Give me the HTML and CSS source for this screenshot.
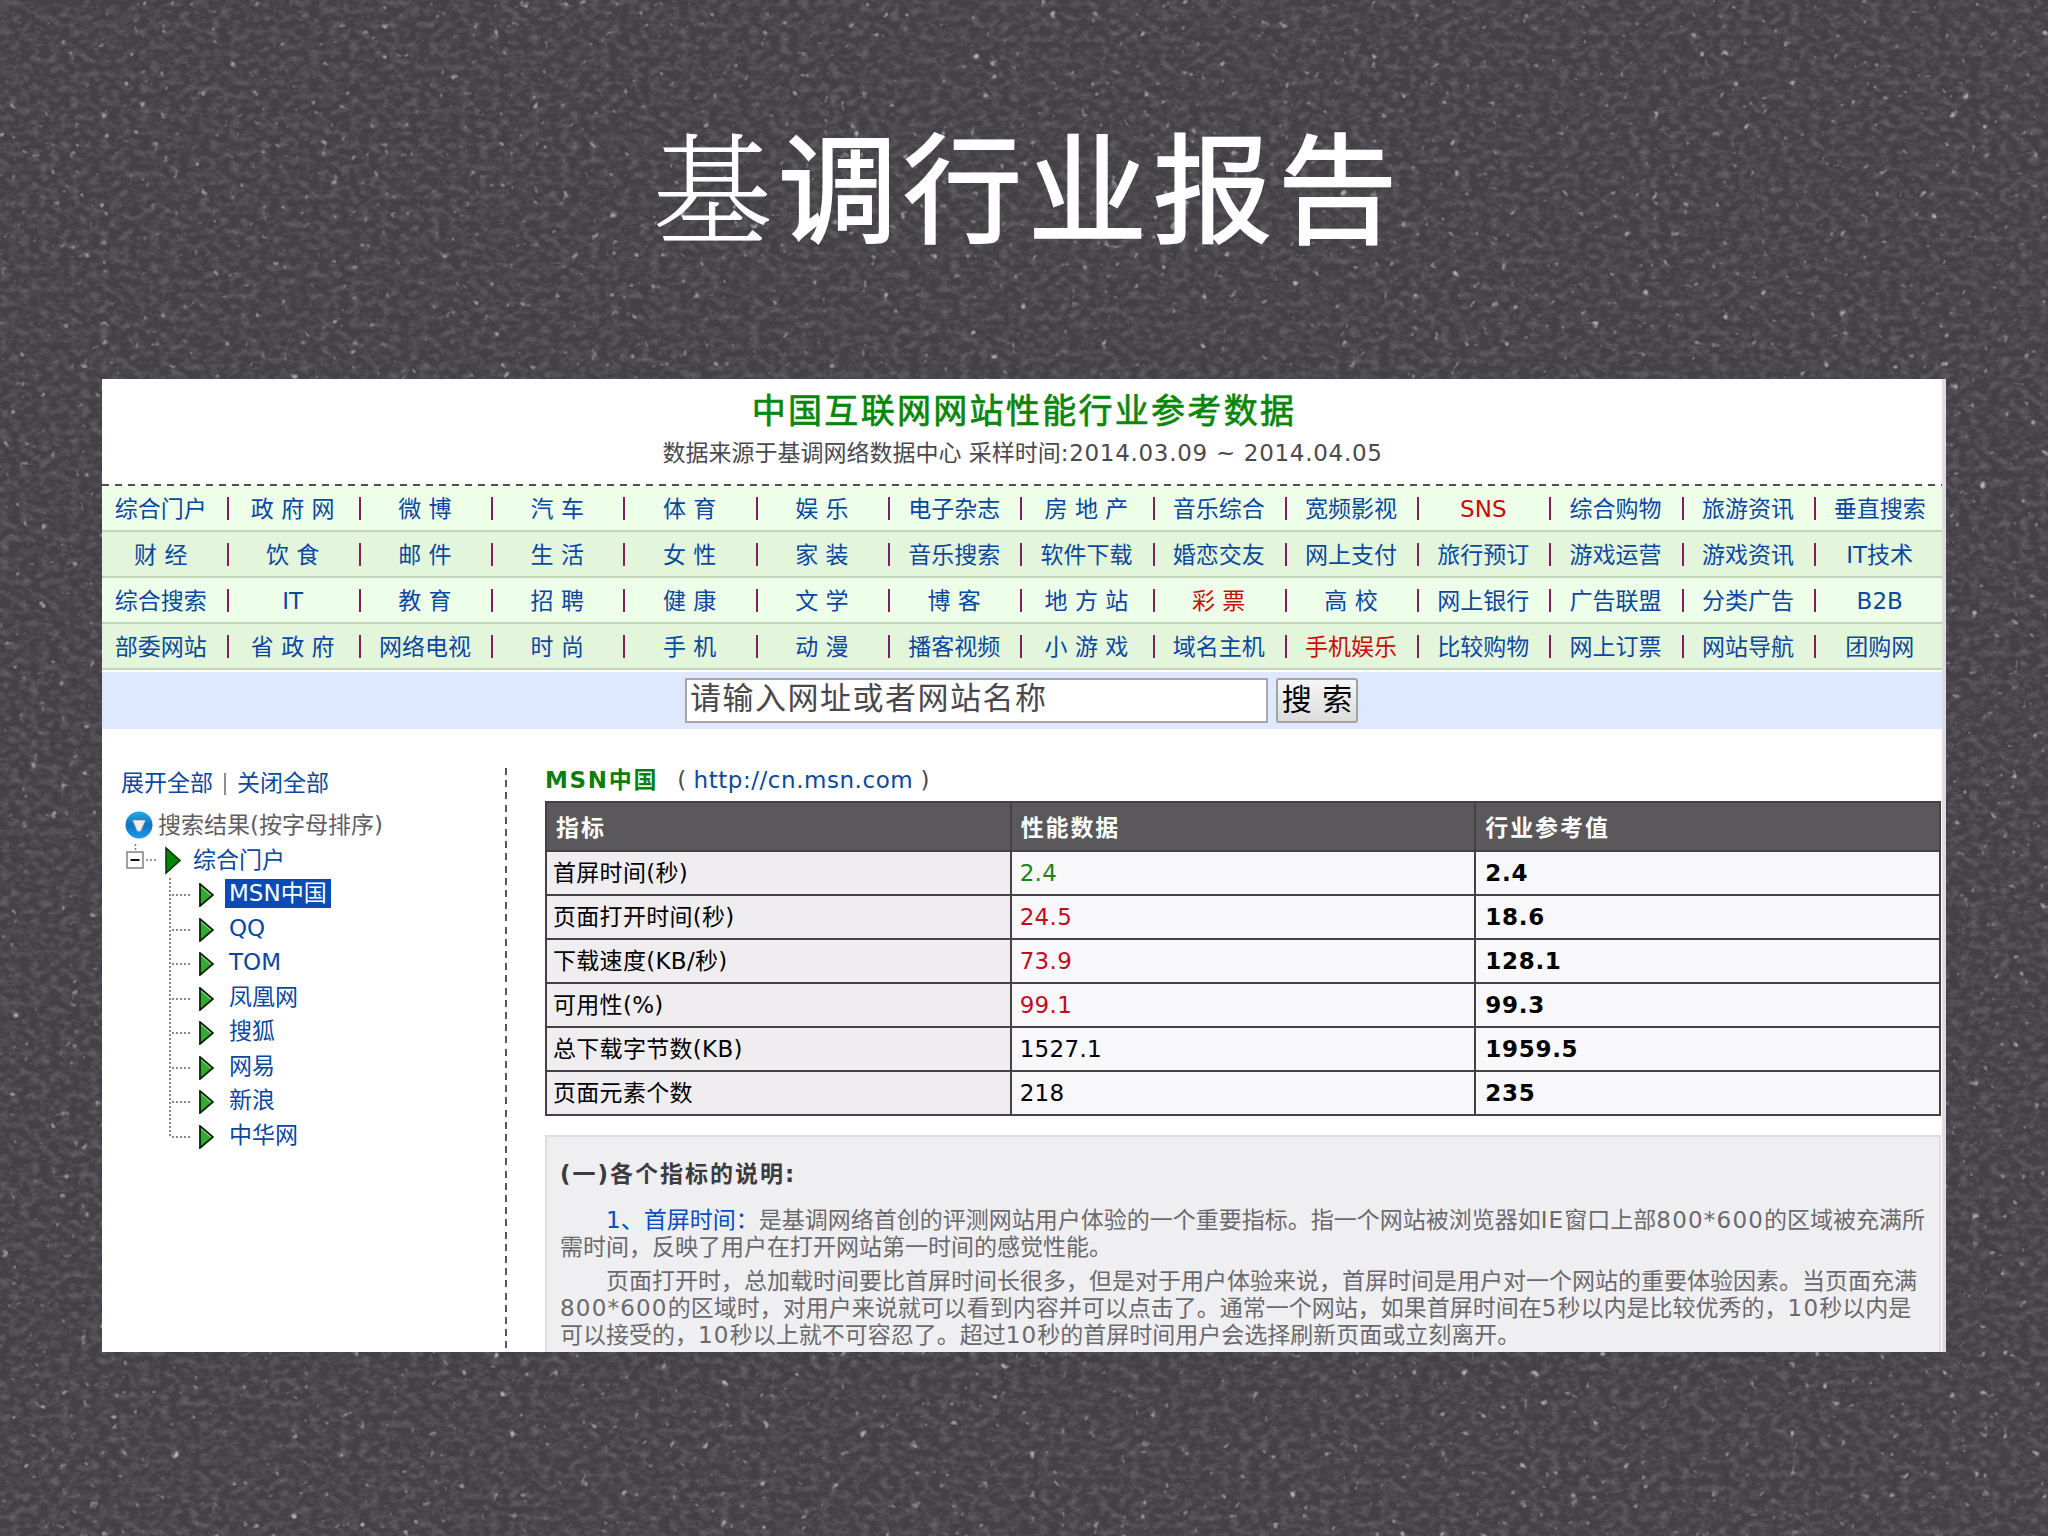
FILE: index.html
```html
<!DOCTYPE html>
<html lang="zh-CN">
<head>
  <meta charset="UTF-8" />
  <title>基调行业报告</title>
  <link rel="stylesheet" href="styles.css">
</head>
<body>

  <!-- slate texture -->
  <svg class="texture" width="2048" height="1536">
    <filter id="grain" x="0" y="0" width="100%" height="100%" color-interpolation-filters="sRGB">
      <feTurbulence type="fractalNoise" baseFrequency="0.1 0.14" numOctaves="4" seed="8" />
      <feColorMatrix type="matrix" values="0 0 0 0 0.52  0 0 0 0 0.51  0 0 0 0 0.53  0.8 0.6 0 0 -0.6" />
    </filter>
    <filter id="specks" x="0" y="0" width="100%" height="100%" color-interpolation-filters="sRGB">
      <feTurbulence type="fractalNoise" baseFrequency="0.1" numOctaves="2" seed="21" />
      <feColorMatrix type="matrix" values="0 0 0 0 0.72  0 0 0 0 0.71  0 0 0 0 0.73  0 5 0 0 -3.55" />
    </filter>
    <rect width="2048" height="1536" filter="url(#grain)" />
    <rect width="2048" height="1536" filter="url(#specks)" />
  </svg>

  <h1><span class="thin">基</span>调行业报告</h1>

  <div class="panel">
    <header>
      <h2>中国互联网网站性能行业参考数据</h2>
      <p>数据来源于基调网络数据中心 采样时间<span class="date">:2014.03.09 ~ 2014.04.05</span></p>
    </header>

    <nav>
      <ul>
        <li>综合门户</li><li>政 府 网</li><li>微 博</li><li>汽 车</li><li>体 育</li><li>娱 乐</li><li>电子杂志</li>
        <li>房 地 产</li><li>音乐综合</li><li>宽频影视</li><li class="hot">SNS</li><li>综合购物</li><li>旅游资讯</li><li>垂直搜索</li>
      </ul>
      <ul>
        <li>财 经</li><li>饮 食</li><li>邮 件</li><li>生 活</li><li>女 性</li><li>家 装</li><li>音乐搜索</li>
        <li>软件下载</li><li>婚恋交友</li><li>网上支付</li><li>旅行预订</li><li>游戏运营</li><li>游戏资讯</li><li>IT技术</li>
      </ul>
      <ul>
        <li>综合搜索</li><li>IT</li><li>教 育</li><li>招 聘</li><li>健 康</li><li>文 学</li><li>博 客</li>
        <li>地 方 站</li><li class="hot">彩 票</li><li>高 校</li><li>网上银行</li><li>广告联盟</li><li>分类广告</li><li>B2B</li>
      </ul>
      <ul>
        <li>部委网站</li><li>省 政 府</li><li>网络电视</li><li>时 尚</li><li>手 机</li><li>动 漫</li><li>播客视频</li>
        <li>小 游 戏</li><li>域名主机</li><li class="hot">手机娱乐</li><li>比较购物</li><li>网上订票</li><li>网站导航</li><li>团购网</li>
      </ul>
    </nav>

    <form class="search">
      <div class="field">请输入网址或者网站名称</div>
      <button type="button">搜 索</button>
    </form>

    <div class="content">
      <aside>
        <div class="toggle"><a>展开全部</a><i></i><a>关闭全部</a></div>
        <div class="result">
          <svg width="28" height="28" viewBox="0 0 28 28">
            <defs>
              <linearGradient id="ball" x1="0" y1="0" x2="0" y2="1">
                <stop offset="0" stop-color="#1cabea" /><stop offset=".5" stop-color="#1173c6" /><stop offset="1" stop-color="#1c9be6" />
              </linearGradient>
            </defs>
            <circle cx="14" cy="14" r="13.5" fill="url(#ball)" />
            <path d="M8 9.500h12L15.500 20h-3z" fill="#eee" stroke="#c9cdd2" />
          </svg>
          <span>搜索结果(按字母排序)</span>
        </div>
        <div class="root">
          <svg width="56" height="34" viewBox="0 0 56 34">
            <path d="M9.500 1v6M20 17h11" stroke="#777" stroke-width="1.500" stroke-dasharray="2 2" fill="none" />
            <rect x="1" y="9" width="16" height="16" fill="#fff" stroke="#888" stroke-width="1.600" />
            <path d="M4.500 17h9" stroke="#111" stroke-width="2" />
            <path d="M40 5v25l14-12.500z" fill="#078507" stroke="#063006" stroke-width="1.500" />
          </svg>
          <a>综合门户</a>
        </div>
        <!-- arrow shared by the tree items -->
        <svg width="0" height="0" class="defs">
          <symbol id="arrow" viewBox="0 0 15 24">
            <path d="M1 1v22L14 12z" fill="#33ab33" />
            <path d="M2 2.500L12.500 11.500" stroke="#a5e6a0" stroke-width="2.500" />
            <path d="M1 1v22L14 12z" fill="none" stroke="#0a220a" stroke-width="1.800" />
          </symbol>
        </svg>
        <ul class="tree">
          <li><svg><use href="#arrow" /></svg><a class="on">MSN中国</a></li>
          <li><svg><use href="#arrow" /></svg><a>QQ</a></li>
          <li><svg><use href="#arrow" /></svg><a>TOM</a></li>
          <li><svg><use href="#arrow" /></svg><a>凤凰网</a></li>
          <li><svg><use href="#arrow" /></svg><a>搜狐</a></li>
          <li><svg><use href="#arrow" /></svg><a>网易</a></li>
          <li><svg><use href="#arrow" /></svg><a>新浪</a></li>
          <li><svg><use href="#arrow" /></svg><a>中华网</a></li>
        </ul>
      </aside>

      <main>
        <div class="site"><b>MSN中国</b><span>( <a>http://cn.msn.com</a> )</span></div>
        <table>
          <tr><th>指标</th><th>性能数据</th><th>行业参考值</th></tr>
          <tr><td>首屏时间(秒)</td><td class="good">2.4</td><td>2.4</td></tr>
          <tr><td>页面打开时间(秒)</td><td class="bad">24.5</td><td>18.6</td></tr>
          <tr><td>下载速度(KB/秒)</td><td class="bad">73.9</td><td>128.1</td></tr>
          <tr><td>可用性(%)</td><td class="bad">99.1</td><td>99.3</td></tr>
          <tr><td>总下载字节数(KB)</td><td>1527.1</td><td>1959.5</td></tr>
          <tr><td>页面元素个数</td><td>218</td><td>235</td></tr>
        </table>

        <div class="notes">
          <h3>(一)各个指标的说明:</h3>
          <p><em>1、首屏时间：</em>是基调网络首创的评测网站用户体验的一个重要指标。指一个网站被浏览器如<span class="num">IE</span>窗口上部<span class="num">800*600</span>的区域被充满所<br>需时间，反映了用户在打开网站第一时间的感觉性能。</p>
          <p>页面打开时，总加载时间要比首屏时间长很多，但是对于用户体验来说，首屏时间是用户对一个网站的重要体验因素。当页面充满<br><span class="num">800*600</span>的区域时，对用户来说就可以看到内容并可以点击了。通常一个网站，如果首屏时间在<span class="num">5</span>秒以内是比较优秀的，<span class="num">10</span>秒以内是<br>可以接受的，<span class="num">10</span>秒以上就不可容忍了。超过<span class="num">10</span>秒的首屏时间用户会选择刷新页面或立刻离开。</p>
        </div>
      </main>
    </div>
  </div>

</body>
</html>
```

FILE: styles.css
```css
* {
  box-sizing: border-box;
  margin: 0;
  padding: 0;
}

body {
  width: 2048px;
  height: 1536px;
  overflow: hidden;
  background: #434145;
  font: 23px/27px "DejaVu Sans", "Noto Sans CJK SC", sans-serif;
  white-space: nowrap;
}

ul {
  list-style: none;
}

a {
  color: #0a48a0;
}

.texture {
  position: absolute;
  left: 0;
  top: 0;
  z-index: -1;
}

.defs {
  position: absolute;
}

h1 {
  height: 379px;
  padding: 92px 0 0 653px;
  color: #fff;
  font: 400 119px/180px "Noto Sans CJK SC", sans-serif;
  letter-spacing: 6px;
  -webkit-text-stroke: 2px #fff;
}

.thin {
  font-family: "Noto Serif CJK SC", "Noto Sans CJK SC", serif;
  font-weight: 200;
  -webkit-text-stroke: 1px #fff;
}

.panel {
  display: flex;
  flex-direction: column;
  width: 1844px;
  height: 973px;
  margin-left: 102px;
  background: #fff;
  border-right: 4px solid #dddce3;
  overflow: hidden;
}

header {
  flex-shrink: 0;
  height: 105px;
  padding-top: 8px;
  text-align: center;
}

header h2 {
  padding-left: 4px;
  color: #0a860a;
  font: 400 34px/44px "Noto Sans CJK SC", sans-serif;
  letter-spacing: 2.3px;
  -webkit-text-stroke: 0.7px #0a860a;
}

header p {
  padding-left: 1px;
  color: #4a494c;
  line-height: 44px;
}

.date {
  letter-spacing: 0.7px;
}

/* category rows */
nav {
  flex-shrink: 0;
  height: 188px;
  padding-top: 2px;
  background: repeating-linear-gradient(90deg, #48544a 0 7px, #f4fff0 7px 12.95px) 0 0 / 100% 2px no-repeat;
}

nav ul {
  display: flex;
  align-items: center;
  height: 46px;
  padding-top: 1px;
  background: #edffe8;
  border-bottom: 2px solid #c3d4b9;
}

nav ul:nth-child(even) {
  background: #e3f6dc;
}

nav li {
  flex: 0 0 132.3px;
  height: 23px;
  padding-right: 2px;
  line-height: 25px;
  border-right: 2px solid #80205f;
  color: #0a48a0;
  text-align: center;
}

nav li:first-child {
  flex-basis: 126.5px;
  padding-right: 7px;
}

nav li:last-child {
  border: 0;
  padding-right: 5px;
}

nav .hot {
  color: #cc0a0a;
}

.search {
  display: flex;
  flex-shrink: 0;
  gap: 8px;
  height: 57px;
  padding: 6px 0 0 583px;
  background: #dee8fe;
}

.field {
  width: 583px;
  height: 45px;
  padding-left: 3px;
  border: 2px solid #a5a5aa;
  background: #fff;
  color: #48474a;
  font: 31px/31px "Noto Sans CJK SC", sans-serif;
  letter-spacing: 1.5px;
}

button {
  width: 82px;
  height: 45px;
  padding-bottom: 7px;
  border: 2px solid #a3a3a3;
  border-radius: 3px;
  background: linear-gradient(#f6f6f6, #dcdcdc);
  color: #000;
  font: 30px/34px "Noto Sans CJK SC", sans-serif;
  word-spacing: 4px;
}

.content {
  display: flex;
  flex: 1;
  min-height: 0;
}

/* site tree */
aside {
  width: 405px;
  padding: 41px 0 0 19px;
  margin-right: 38px;
  background: repeating-linear-gradient(#55545a 0 7px, #fff 7px 12.2px) 100% 39px / 2px 100% no-repeat;
}

.toggle {
  display: flex;
  align-items: center;
}

.toggle i {
  width: 2px;
  height: 22px;
  margin: 0 11px;
  background: #8a8d98;
}

.result {
  display: flex;
  align-items: center;
  gap: 5px;
  height: 28px;
  margin: 14px 0 4px 4px;
  color: #5f5e62;
}

.root {
  display: flex;
  align-items: center;
  gap: 11px;
  height: 34px;
  padding-left: 5px;
}

.tree {
  width: 200px;
  height: 259px;
  margin: 1px 0 0 48px;
  background: repeating-linear-gradient(#888 0 2px, #fff 2px 4px) 0 0 / 2px 100% no-repeat;
}

.tree li {
  display: flex;
  align-items: center;
  height: 34.5px;
  background: repeating-linear-gradient(90deg, #888 0 2px, #fff 2px 4px) 3px 16px / 18px 2px no-repeat;
}

.tree svg {
  width: 15px;
  height: 24px;
  margin: 0 11px 0 30px;
}

.tree a {
  height: 29px;
  margin-top: -3px;
  padding: 0 4px;
  line-height: 29px;
}

.tree .on {
  background: #0a4cb4;
  color: #fff;
}

main {
  width: 1396px;
  padding-top: 32px;
}

.site {
  display: flex;
  gap: 19px;
  height: 40px;
  line-height: 38px;
  color: #4a494c;
}

.site b {
  color: #0a800a;
  letter-spacing: 1.7px;
}

.site a {
  letter-spacing: 0.55px;
}

table {
  width: 1396px;
  table-layout: fixed;
  border-collapse: collapse;
}

th,
td {
  height: 44px;
  padding: 0 8px;
  border: 2px solid #434144;
  background: #f8f7fa;
  text-align: left;
}

th {
  height: 49px;
  padding: 4px 9px 0;
  background: #5a585a;
  color: #fff;
  letter-spacing: 1.9px;
}

td {
  letter-spacing: 0.3px;
}

td:first-child {
  padding-left: 6px;
  background: #efedf0;
}

td:last-child {
  padding-left: 9px;
  font-weight: bold;
  letter-spacing: 0.7px;
}

.good {
  color: #1b831b;
}

.bad {
  color: #c40a20;
}

/* metric notes */
.notes {
  height: 300px;
  margin-top: 19px;
  padding: 24px 0 0 13px;
  border: 2px solid #dedde0;
  background: #efeef1;
  color: #6a696d;
}

.notes h3 {
  margin-bottom: 19px;
  color: #3c3b3e;
  font-size: 23px;
  letter-spacing: 2px;
}

.notes p {
  margin-bottom: 7px;
  text-indent: 46px;
}

.notes em {
  color: #0a4cc0;
  font-style: normal;
}

.num {
  letter-spacing: 1.2px;
}
```
